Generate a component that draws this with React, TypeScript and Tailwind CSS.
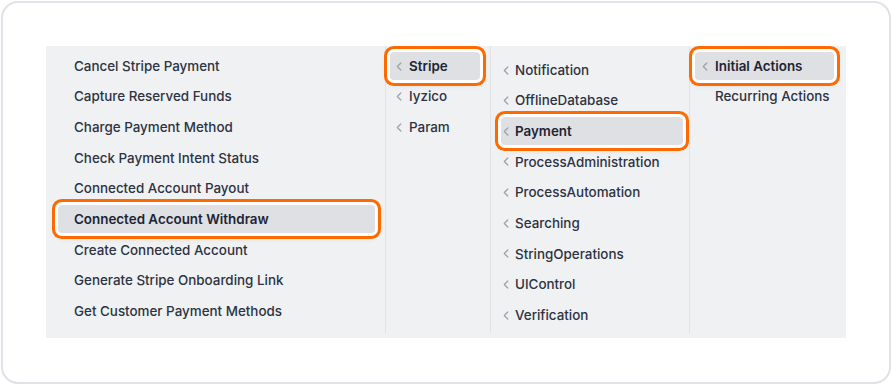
import type { ReactNode } from "react";

type Item = { label: string; active?: boolean };

const actions: Item[] = [
  { label: "Cancel Stripe Payment" },
  { label: "Capture Reserved Funds" },
  { label: "Charge Payment Method" },
  { label: "Check Payment Intent Status" },
  { label: "Connected Account Payout" },
  { label: "Connected Account Withdraw", active: true },
  { label: "Create Connected Account" },
  { label: "Generate Stripe Onboarding Link" },
  { label: "Get Customer Payment Methods" },
];

const providers: Item[] = [
  { label: "Stripe", active: true },
  { label: "Iyzico" },
  { label: "Param" },
];

const categories: Item[] = [
  { label: "Notification" },
  { label: "OfflineDatabase" },
  { label: "Payment", active: true },
  { label: "ProcessAdministration" },
  { label: "ProcessAutomation" },
  { label: "Searching" },
  { label: "StringOperations" },
  { label: "UIControl" },
  { label: "Verification" },
];

const groups: Item[] = [
  { label: "Initial Actions", active: true },
  { label: "Recurring Actions" },
];

function Chevron() {
  return (
    <svg width="6" height="9" viewBox="0 0 6 9" fill="none" className="shrink-0">
      <path d="M4.8 1 1.3 4.5 4.8 8" stroke="#9ca3af" strokeWidth="1.3" strokeLinecap="round" strokeLinejoin="round" />
    </svg>
  );
}

function Row({ item, lead }: { item: Item; lead: ReactNode }) {
  return (
    <div
      className={
        "flex h-[28px] items-center rounded-[4px] text-[13.4px] leading-none " +
        (item.active
          ? "bg-[#dfe0e4] font-semibold text-[#1e2433] shadow-[0_0_0_3px_#ffffff,0_0_0_6px_#ff6a00,0_3px_10px_rgba(0,0,0,0.12)]"
          : "font-medium text-[#2c3342]")
      }
    >
      {lead}
      <span className="whitespace-nowrap pt-px">{item.label}</span>
    </div>
  );
}

export default function App() {
  return (
    <div className="h-[385px] w-[892px] bg-white p-[1px] font-['Inter','Liberation_Sans',sans-serif]">
      <div className="h-full rounded-[17px] border-2 border-[#dfe2e6] bg-white pl-[43px] pt-[43px]">
        <div className="flex h-[292px] w-[800px] bg-[#f0f1f3] pb-[5px]">
          {/* actions */}
          <div className="flex w-[339px] flex-col gap-[2.625px] pl-[12px] pr-[10px] pt-[6px]">
            {actions.map((a) => (
              <Row key={a.label} item={a} lead={<span className="w-[16px] shrink-0" />} />
            ))}
          </div>

          {/* providers */}
          <div className="flex w-[105px] flex-col gap-[2.625px] border-l border-[#e0e2e6] pl-[4px] pr-[10px] pt-[6px]">
            {providers.map((p) => (
              <Row
                key={p.label}
                item={p}
                lead={
                  <span className="flex w-[19px] shrink-0 pl-[6px]">
                    <Chevron />
                  </span>
                }
              />
            ))}
          </div>

          {/* categories */}
          <div className="flex w-[199px] flex-col gap-[2.625px] border-l border-[#e0e2e6] pl-[10px] pr-[6px] pt-[10px]">
            {categories.map((c) => (
              <Row
                key={c.label}
                item={c}
                lead={
                  <span className="flex w-[14px] shrink-0 pl-[2px]">
                    <Chevron />
                  </span>
                }
              />
            ))}
          </div>

          {/* groups */}
          <div className="flex w-[157px] flex-col gap-[2.625px] border-l border-[#e0e2e6] pl-[5px] pr-[12px] pt-[6px]">
            {groups.map((g, i) => (
              <Row
                key={g.label}
                item={g}
                lead={
                  <span className="flex w-[20px] shrink-0 pl-[7px]">
                    {i === 0 ? <Chevron /> : null}
                  </span>
                }
              />
            ))}
          </div>
        </div>
      </div>
    </div>
  );
}
